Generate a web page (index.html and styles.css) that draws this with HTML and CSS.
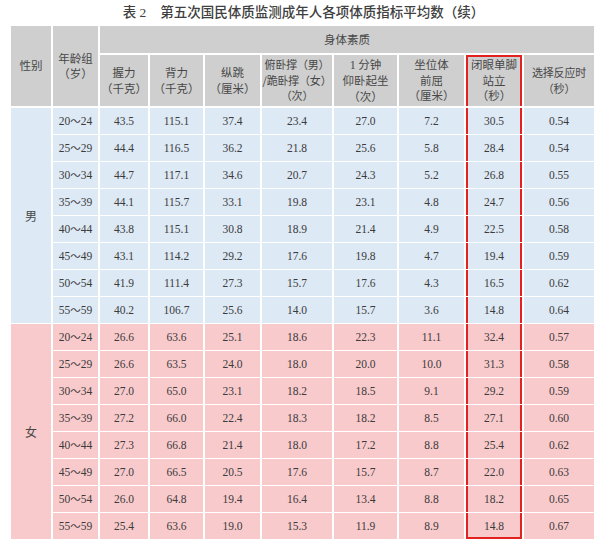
FILE: index.html
```html
<!DOCTYPE html>
<html lang="zh-CN">
<head>
<meta charset="utf-8">
<title>表2 第五次国民体质监测成年人各项体质指标平均数（续）</title>
<link rel="stylesheet" href="styles.css">
</head>
<body>
<div class="page">
  <h1 class="title"><span class="tnum">表 <span class="lat">2</span></span>第五次国民体质监测成年人各项体质指标平均数（续）</h1>
  <table class="data">
    <colgroup>
      <col class="c1"><col class="c2"><col class="c3"><col class="c4"><col class="c5">
      <col class="c6"><col class="c7"><col class="c8"><col class="c9"><col class="c10">
    </colgroup>
    <thead>
      <tr class="h1">
        <th rowspan="2">性别</th>
        <th rowspan="2">年龄组<br>（岁）</th>
        <th colspan="8">身体素质</th>
      </tr>
      <tr class="h2">
        <th>握力<br>（千克）</th>
        <th>背力<br>（千克）</th>
        <th>纵跳<br>（厘米）</th>
        <th class="tight">俯卧撑（男）<br>/跪卧撑（女）<br>（次）</th>
        <th><span class="lat">1</span> 分钟<br>仰卧起坐<br>（次）</th>
        <th>坐位体<br>前屈<br>（厘米）</th>
        <th class="hl hl-top">闭眼单脚<br>站立<br>（秒）</th>
        <th class="tight">选择反应时<br>（秒）</th>
      </tr>
    </thead>
    <tbody class="male">
      <tr><td class="sex" rowspan="8">男</td><td>20<span class="til">～</span>24</td><td>43.5</td><td>115.1</td><td>37.4</td><td>23.4</td><td>27.0</td><td>7.2</td><td class="hl">30.5</td><td>0.54</td></tr>
      <tr><td>25<span class="til">～</span>29</td><td>44.4</td><td>116.5</td><td>36.2</td><td>21.8</td><td>25.6</td><td>5.8</td><td class="hl">28.4</td><td>0.54</td></tr>
      <tr><td>30<span class="til">～</span>34</td><td>44.7</td><td>117.1</td><td>34.6</td><td>20.7</td><td>24.3</td><td>5.2</td><td class="hl">26.8</td><td>0.55</td></tr>
      <tr><td>35<span class="til">～</span>39</td><td>44.1</td><td>115.7</td><td>33.1</td><td>19.8</td><td>23.1</td><td>4.8</td><td class="hl">24.7</td><td>0.56</td></tr>
      <tr><td>40<span class="til">～</span>44</td><td>43.8</td><td>115.1</td><td>30.8</td><td>18.9</td><td>21.4</td><td>4.9</td><td class="hl">22.5</td><td>0.58</td></tr>
      <tr><td>45<span class="til">～</span>49</td><td>43.1</td><td>114.2</td><td>29.2</td><td>17.6</td><td>19.8</td><td>4.7</td><td class="hl">19.4</td><td>0.59</td></tr>
      <tr><td>50<span class="til">～</span>54</td><td>41.9</td><td>111.4</td><td>27.3</td><td>15.7</td><td>17.6</td><td>4.3</td><td class="hl">16.5</td><td>0.62</td></tr>
      <tr><td>55<span class="til">～</span>59</td><td>40.2</td><td>106.7</td><td>25.6</td><td>14.0</td><td>15.7</td><td>3.6</td><td class="hl">14.8</td><td>0.64</td></tr>
    </tbody>
    <tbody class="female">
      <tr><td class="sex" rowspan="8">女</td><td>20<span class="til">～</span>24</td><td>26.6</td><td>63.6</td><td>25.1</td><td>18.6</td><td>22.3</td><td>11.1</td><td class="hl">32.4</td><td>0.57</td></tr>
      <tr><td>25<span class="til">～</span>29</td><td>26.6</td><td>63.5</td><td>24.0</td><td>18.0</td><td>20.0</td><td>10.0</td><td class="hl">31.3</td><td>0.58</td></tr>
      <tr><td>30<span class="til">～</span>34</td><td>27.0</td><td>65.0</td><td>23.1</td><td>18.2</td><td>18.5</td><td>9.1</td><td class="hl">29.2</td><td>0.59</td></tr>
      <tr><td>35<span class="til">～</span>39</td><td>27.2</td><td>66.0</td><td>22.4</td><td>18.3</td><td>18.2</td><td>8.5</td><td class="hl">27.1</td><td>0.60</td></tr>
      <tr><td>40<span class="til">～</span>44</td><td>27.3</td><td>66.8</td><td>21.4</td><td>18.0</td><td>17.2</td><td>8.8</td><td class="hl">25.4</td><td>0.62</td></tr>
      <tr><td>45<span class="til">～</span>49</td><td>27.0</td><td>66.5</td><td>20.5</td><td>17.6</td><td>15.7</td><td>8.7</td><td class="hl">22.0</td><td>0.63</td></tr>
      <tr><td>50<span class="til">～</span>54</td><td>26.0</td><td>64.8</td><td>19.4</td><td>16.4</td><td>13.4</td><td>8.8</td><td class="hl">18.2</td><td>0.65</td></tr>
      <tr><td>55<span class="til">～</span>59</td><td>25.4</td><td>63.6</td><td>19.0</td><td>15.3</td><td>11.9</td><td>8.9</td><td class="hl hl-bottom">14.8</td><td>0.67</td></tr>
    </tbody>
  </table>
</div>
</body>
</html>
```
FILE: styles.css
```css
html, body {
  margin: 0;
  padding: 0;
  background: #ffffff;
}

.page {
  width: 600px;
  height: 543px;
  padding: 0 0 0 9px;
  box-sizing: border-box;
}

.title {
  margin: 0;
  height: 24px;
  padding-top: 2px;
  padding-right: 2px;
  box-sizing: border-box;
  text-align: center;
  font-family: "Noto Sans CJK SC", "Noto Sans", sans-serif;
  font-size: 13.5px;
  line-height: 18px;
  font-weight: 500;
  color: #404040;
}

.tnum {
  margin-right: 14px;
}

.lat {
  font-family: "Liberation Serif", serif;
}

.data {
  border-collapse: collapse;
  table-layout: fixed;
  width: 585px;
  font-family: "Liberation Serif", "Noto Sans CJK SC", serif;
  color: #3b3b3b;
}

.c1 { width: 42px; }
.c2 { width: 47px; }
.c3 { width: 50px; }
.c4 { width: 55px; }
.c5 { width: 57px; }
.c6 { width: 72px; }
.c7 { width: 65px; }
.c8 { width: 67px; }
.c9 { width: 58px; }
.c10 { width: 72px; }

.data th {
  background: #cfcfcf;
  border: 2px solid #ffffff;
  font-family: "Noto Sans CJK SC", sans-serif;
  font-weight: 400;
  font-size: 11.5px;
  line-height: 15.5px;
  color: #474747;
  padding: 0;
  text-align: center;
  vertical-align: middle;
  white-space: nowrap;
}

.data th.tight {
  font-size: 11px;
  letter-spacing: -0.2px;
}

.data th .lat {
  font-size: 12px;
}

.h1 { height: 29px; }
.h2 { height: 53px; }

.data td {
  border-top: 1px solid #ffffff;
  border-bottom: 1px solid #ffffff;
  border-left: 2px solid #ffffff;
  border-right: 2px solid #ffffff;
  padding: 0;
  height: 26px;
  text-align: center;
  vertical-align: middle;
  font-size: 11.5px;
  line-height: 14px;
}

.data .til {
  font-family: "Noto Sans CJK SC", sans-serif;
  font-size: 10.5px;
}

.data td.sex {
  font-family: "Noto Sans CJK SC", sans-serif;
  font-size: 12px;
  color: #474747;
}

.male td { background: #dde9f5; }
.female td { background: #f9cacc; }

.data .hl {
  box-shadow: inset 2px 0 0 #e3211f, inset -2px 0 0 #e3211f;
}

.data .hl-top {
  box-shadow: inset 2px 0 0 #e3211f, inset -2px 0 0 #e3211f, inset 0 2px 0 #e3211f;
}

.data .hl-bottom {
  box-shadow: inset 2px 0 0 #e3211f, inset -2px 0 0 #e3211f, inset 0 -2px 0 #e3211f;
}
```
